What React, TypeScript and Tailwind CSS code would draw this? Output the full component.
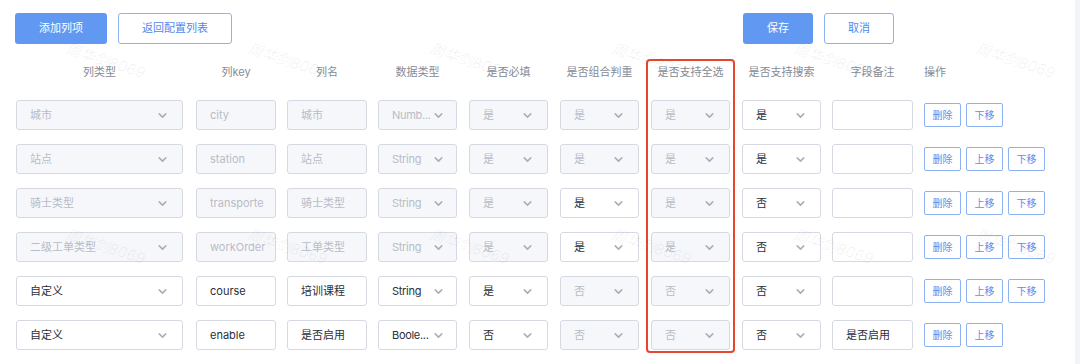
import { ChevronDown } from 'lucide-react'

type Cell = { text: string; disabled?: boolean }

interface Row {
  type: Cell
  key: Cell
  name: Cell
  dataType: Cell
  required: Cell
  dedupe: Cell
  selectAll: Cell
  search: Cell
  remark: string
  actions: string[]
}

const d = (text: string): Cell => ({ text, disabled: true })
const a = (text: string): Cell => ({ text })

// long data types are shown clipped, as the select renders them
const rows: Row[] = [
  { type: d('城市'), key: d('city'), name: d('城市'), dataType: d('Numb...'), required: d('是'), dedupe: d('是'), selectAll: d('是'), search: a('是'), remark: '', actions: ['删除', '下移'] },
  { type: d('站点'), key: d('station'), name: d('站点'), dataType: d('String'), required: d('是'), dedupe: d('是'), selectAll: d('是'), search: a('是'), remark: '', actions: ['删除', '上移', '下移'] },
  { type: d('骑士类型'), key: d('transporte'), name: d('骑士类型'), dataType: d('String'), required: d('是'), dedupe: a('是'), selectAll: d('是'), search: a('否'), remark: '', actions: ['删除', '上移', '下移'] },
  { type: d('二级工单类型'), key: d('workOrder'), name: d('工单类型'), dataType: d('String'), required: d('是'), dedupe: a('是'), selectAll: d('是'), search: a('否'), remark: '', actions: ['删除', '上移', '下移'] },
  { type: a('自定义'), key: a('course'), name: a('培训课程'), dataType: a('String'), required: a('是'), dedupe: d('否'), selectAll: d('否'), search: a('否'), remark: '', actions: ['删除', '上移', '下移'] },
  { type: a('自定义'), key: a('enable'), name: a('是否启用'), dataType: a('Boole...'), required: a('否'), dedupe: d('否'), selectAll: d('否'), search: a('否'), remark: '是否启用', actions: ['删除', '上移'] },
]

const headers = ['列类型', '列key', '列名', '数据类型', '是否必填', '是否组合判重', '是否支持全选', '是否支持搜索', '字段备注']
const headerWidths = ['w-[167px]', 'w-[80px]', 'w-[80px]', 'w-[79px]', 'w-[79px]', 'w-[79px]', 'w-[79px]', 'w-[79px]', 'w-[81px]']

function boxClass(disabled?: boolean) {
  return disabled
    ? 'border-[#d6d9e1] bg-[#f6f7fb] text-[#b8bcc6]'
    : 'border-[#d6d9e1] bg-white text-[#2a2f3a]'
}

function Select({ cell, width, narrow }: { cell: Cell; width: string; narrow?: boolean }) {
  return (
    <div className={`${width} h-[30px] rounded-[3px] border flex items-center pl-[13px] ${narrow ? 'pr-[11px]' : 'pr-[13px]'} ${boxClass(cell.disabled)}`}>
      <span className={`flex-1 whitespace-nowrap overflow-hidden ${narrow ? 'tracking-[-0.3px]' : ''}`}>{cell.text}</span>
      <ChevronDown size={13} strokeWidth={2.8} className="shrink-0 text-[#a9aeb8]" />
    </div>
  )
}

function Input({ cell, width }: { cell: Cell; width: string }) {
  return (
    <div className={`${width} h-[30px] rounded-[3px] border flex items-center pl-[13px] overflow-hidden whitespace-nowrap ${boxClass(cell.disabled)}`}>
      {cell.text}
    </div>
  )
}

function SmallButton({ label }: { label: string }) {
  return (
    <div className="h-[24px] w-[37px] rounded-[2px] border border-[#8db2f3] bg-white text-[#5b8ff0] text-[10px] flex items-center justify-center">
      {label}
    </div>
  )
}

function Watermark({ left, top }: { left: number; top: number }) {
  return (
    <div
      className="pointer-events-none absolute rotate-[18deg] whitespace-nowrap text-[15px] italic text-black/[0.06]"
      style={{ left, top }}
    >
      周华剑8069
    </div>
  )
}

export default function App() {
  const marks: { left: number; top: number }[] = []
  for (const top of [50, 236]) {
    for (const left of [64, 246, 428, 610, 792, 974]) marks.push({ left, top })
  }

  return (
    <div
      className="relative flex h-[364px] w-[1080px] overflow-hidden bg-white text-[11px]"
      style={{ fontFamily: 'Inter, "Noto Sans CJK SC", sans-serif' }}
    >
      <div className="w-[1075px] pl-[15px] pt-[13px]">
        {/* top toolbar */}
        <div className="flex h-[31px]">
          <div className="flex gap-[11px]">
            <div className="w-[92px] rounded-[3px] bg-[#6198f1] text-white flex items-center justify-center">添加列项</div>
            <div className="w-[114px] rounded-[3px] border border-[#8db2f3] text-[#4f89ef] flex items-center justify-center">返回配置列表</div>
          </div>
          <div className="ml-[511px] flex gap-[11px]">
            <div className="w-[70px] rounded-[3px] bg-[#6198f1] text-white flex items-center justify-center">保存</div>
            <div className="w-[70px] rounded-[3px] border border-[#8db2f3] text-[#4f89ef] flex items-center justify-center">取消</div>
          </div>
        </div>

        {/* header */}
        <div className="mt-[15px] ml-px grid h-[26px] grid-cols-[180px_91px_91px_91px_91px_91px_91px_90px_92px_1fr] items-center text-[#868b95]">
          {headers.map((h, i) => (
            <div key={h} className={`${headerWidths[i]} text-center`}>{h}</div>
          ))}
          <div>操作</div>
        </div>

        {/* rows */}
        <div className="mt-[15px] ml-px flex flex-col gap-[14px]">
          {rows.map((r, i) => (
            <div key={i} className="grid h-[30px] grid-cols-[180px_91px_91px_91px_91px_91px_91px_90px_92px_1fr] items-center">
              <Select cell={r.type} width="w-[167px]" />
              <Input cell={r.key} width="w-[80px]" />
              <Input cell={r.name} width="w-[80px]" />
              <Select cell={r.dataType} width="w-[79px]" narrow />
              <Select cell={r.required} width="w-[79px]" />
              <Select cell={r.dedupe} width="w-[79px]" />
              <Select cell={r.selectAll} width="w-[79px]" />
              <Select cell={r.search} width="w-[79px]" />
              <Input cell={a(r.remark)} width="w-[81px]" />
              <div className="flex gap-[5px]">
                {r.actions.map((act) => (
                  <SmallButton key={act} label={act} />
                ))}
              </div>
            </div>
          ))}
        </div>
      </div>
      <div className="flex-1 bg-[#f3f4f8]" />

      {/* highlight annotation */}
      <div className="pointer-events-none absolute left-[646px] top-[59px] h-[294px] w-[89px] rounded-[4px] border-2 border-[#e8462c]" />

      {marks.map((m, i) => (
        <Watermark key={i} left={m.left} top={m.top} />
      ))}
    </div>
  )
}
